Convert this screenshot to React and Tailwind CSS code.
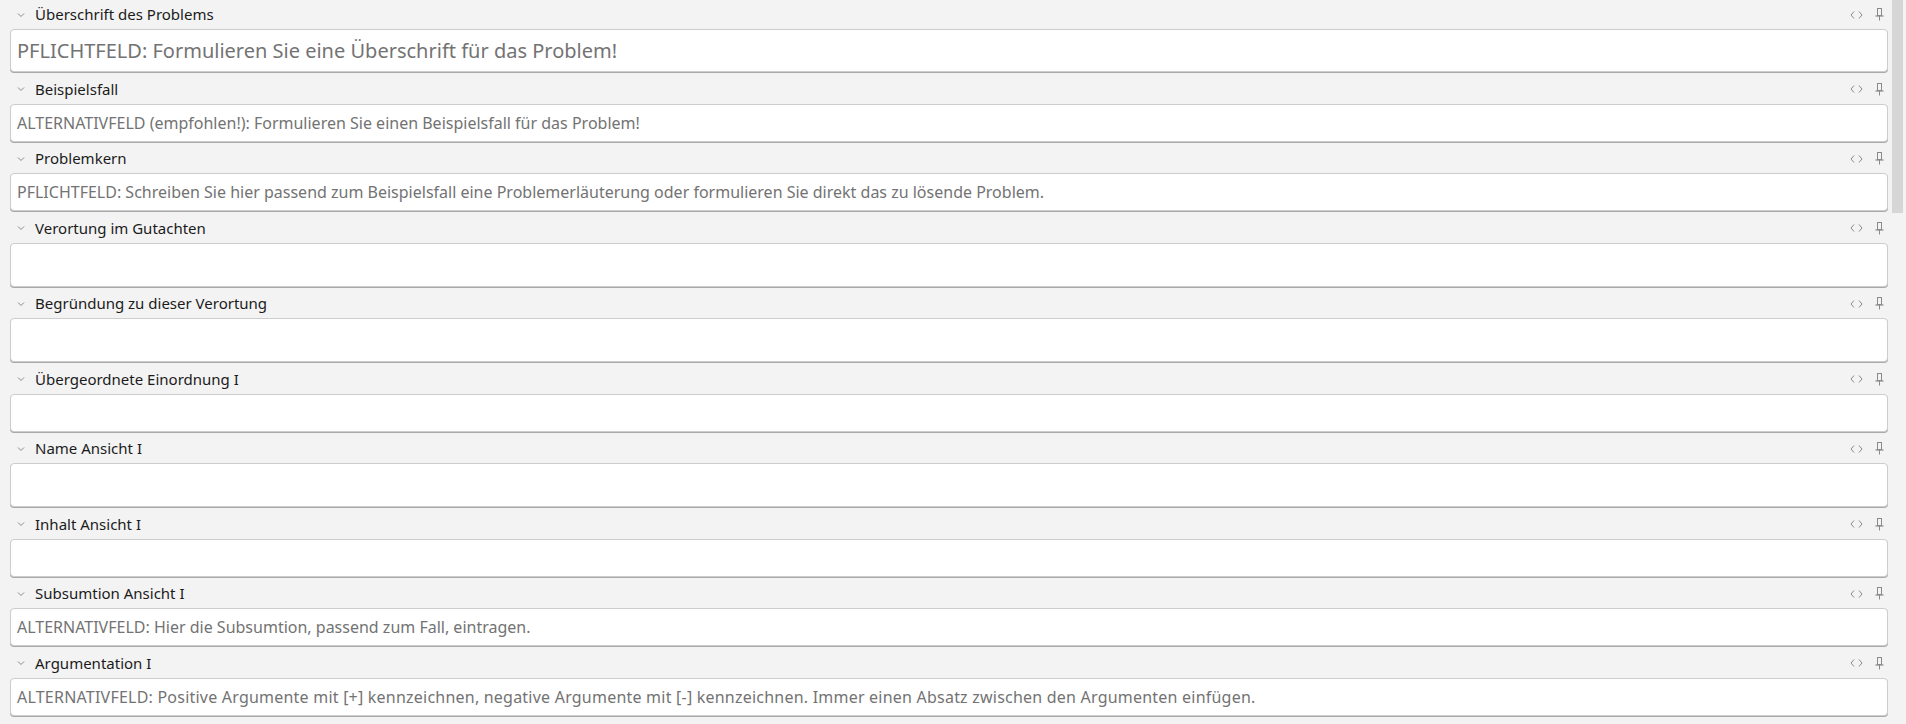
import React from "react";

const fields = [
  { label: "Überschrift des Problems", text: "PFLICHTFELD: Formulieren Sie eine Überschrift für das Problem!", h: "h-[43px]", big: true },
  { label: "Beispielsfall", text: "ALTERNATIVFELD (empfohlen!): Formulieren Sie einen Beispielsfall für das Problem!", h: "h-[38px]" },
  { label: "Problemkern", text: "PFLICHTFELD: Schreiben Sie hier passend zum Beispielsfall eine Problemerläuterung oder formulieren Sie direkt das zu lösende Problem.", h: "h-[38px]" },
  { label: "Verortung im Gutachten", text: "", h: "h-[44px]" },
  { label: "Begründung zu dieser Verortung", text: "", h: "h-[44px]" },
  { label: "Übergeordnete Einordnung I", text: "", h: "h-[38px]" },
  { label: "Name Ansicht I", text: "", h: "h-[44px]" },
  { label: "Inhalt Ansicht I", text: "", h: "h-[38px]" },
  { label: "Subsumtion Ansicht I", text: "ALTERNATIVFELD: Hier die Subsumtion, passend zum Fall, eintragen.", h: "h-[38px]" },
  { label: "Argumentation I", text: "ALTERNATIVFELD: Positive Argumente mit [+] kennzeichnen, negative Argumente mit [-] kennzeichnen. Immer einen Absatz zwischen den Argumenten einfügen.", h: "h-[38px]", wide: true },
];

function Chevron() {
  return (
    <svg width="8" height="6" viewBox="0 0 8 6" className="text-[#8a8a8a]">
      <path d="M1 1.5 L4 4.5 L7 1.5" fill="none" stroke="currentColor" strokeWidth="1" />
    </svg>
  );
}

function CodeIcon() {
  return (
    <svg width="13" height="10" viewBox="0 0 13 10" className="text-[#8a8a8a]">
      <path d="M4 1.5 L1 5 L4 8.5" fill="none" stroke="currentColor" strokeWidth="1" />
      <path d="M9 1.5 L12 5 L9 8.5" fill="none" stroke="currentColor" strokeWidth="1" />
    </svg>
  );
}

function PinIcon() {
  return (
    <svg width="9" height="13" viewBox="0 0 9 13" className="text-[#8a8a8a]">
      <rect x="2.5" y="0.5" width="4" height="7" fill="none" stroke="currentColor" strokeWidth="1" />
      <path d="M0.5 8 L8.5 8" stroke="currentColor" strokeWidth="1.2" />
      <path d="M4.5 8 L4.5 12.5" stroke="currentColor" strokeWidth="1" />
    </svg>
  );
}

function Field({ label, text, h, big, wide }) {
  return (
    <div className="mb-[2.5px]">
      <div className="flex items-center h-[29px]">
        <div className="ml-[7px] flex items-center">
          <Chevron />
        </div>
        <span className="ml-[10px] text-[15px] text-[#1b1b1b] flex-1">{label}</span>
        <div className="flex items-center gap-[12px] pr-[4px]">
          <CodeIcon />
          <PinIcon />
        </div>
      </div>
      <div
        className={`${h} bg-white border border-[#cdcdcd] rounded-[4px] shadow-[0_1px_0_#a9a9a9] flex items-center px-[6px] text-[#737373] whitespace-nowrap overflow-hidden ${
          big ? "text-[20px]" : "text-[16px]"
        } ${wide ? "tracking-[0.22px]" : ""}`}
      >
        {text}
      </div>
    </div>
  );
}

export default function App() {
  return (
    <div
      className="w-[1906px] h-[724px] overflow-hidden bg-[#f3f3f3] flex"
      style={{ fontFamily: '"Noto Sans", "Open Sans", sans-serif' }}
    >
      <div className="flex-1 pl-[10px] pr-[4px]">
        {fields.map((f) => (
          <Field key={f.label} {...f} />
        ))}
      </div>
      <div className="w-[14px]">
        <div className="w-[11px] h-[213px] bg-[#d6d6d6]" />
      </div>
    </div>
  );
}
